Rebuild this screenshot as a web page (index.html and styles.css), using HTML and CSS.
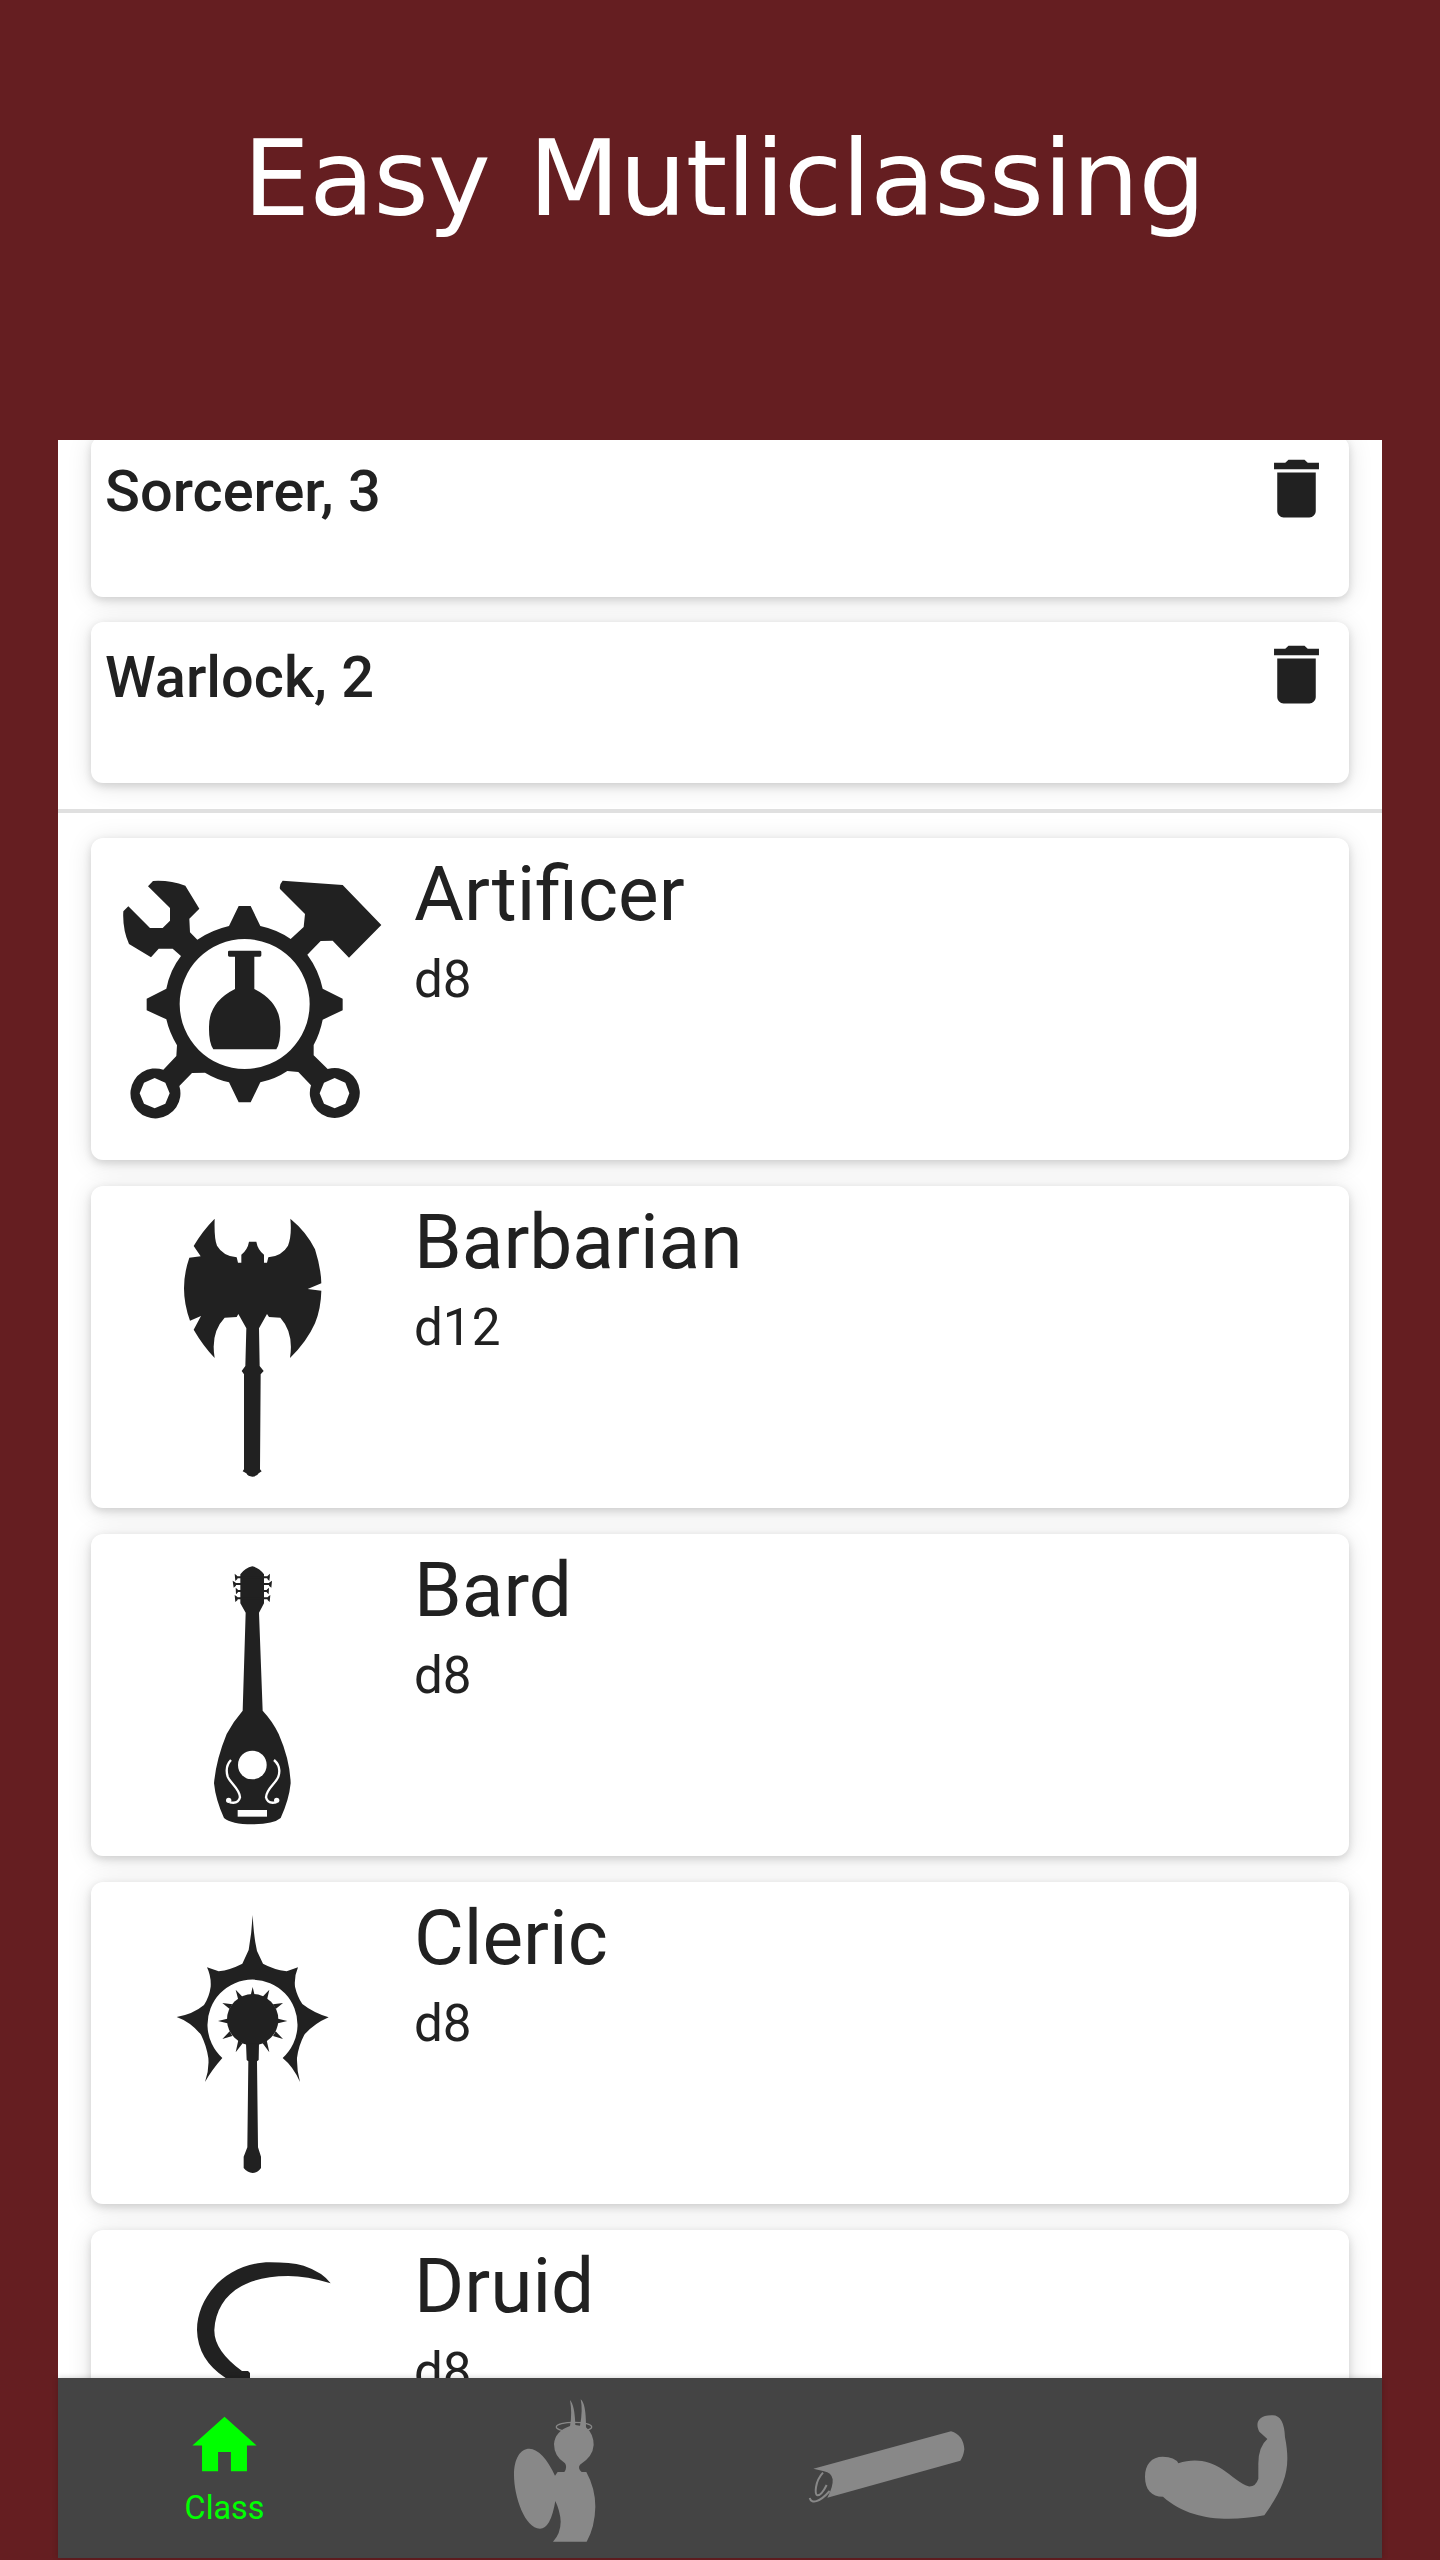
FILE: index.html
```html
<!DOCTYPE html>
<html lang="en">
<head>
<meta charset="utf-8">
<title>Easy Mutliclassing</title>
<link rel="stylesheet" href="styles.css">
</head>
<body>
<main class="promo">
  <h1 class="headline">Easy Mutliclassing</h1>
  <section class="phone">
    <div class="scroll">
      <div class="taken">
        <article class="level-card">
          <h2 class="level-name">Sorcerer, 3</h2>
          <svg class="trash" viewBox="0 0 24 24"><path d="M6 19c0 1.100.9 2 2 2h8c1.100 0 2-.9 2-2V7H6v12zM19 4h-3.500l-1-1h-5l-1 1H5v2h14V4z"/></svg>
        </article>
        <article class="level-card">
          <h2 class="level-name">Warlock, 2</h2>
          <svg class="trash" viewBox="0 0 24 24"><path d="M6 19c0 1.100.9 2 2 2h8c1.100 0 2-.9 2-2V7H6v12zM19 4h-3.500l-1-1h-5l-1 1H5v2h14V4z"/></svg>
        </article>
      </div>
      <div class="classes">
        <article class="class-card">
          <svg class="emblem" viewBox="-27 -36 969 969">
            <path fill-rule="evenodd" d="M387 228L416 168H452L481 228Q532 239 572 267L611 231L615 192L540 117Q537 104 548 92L728 105L844 225L747 323L698 272L662 273L622 314Q656 360 668 416L728 446V481L668 509Q660 550 641 585V616L683 657A75 75 0 1 1 633 706L595 666L562 663Q527 687 481 697L452 757H416L387 697Q348 688 315 668L276 669L238 708A75 75 0 1 1 190 659L229 618L231 586Q208 548 199 508L140 481V446L199 416Q210 360 243 318L218 296H176L153 322L87 282Q67 237 70 184L85 169L150 234H188L210 212V174L144 109L159 93Q210 90 256 107L298 176L268 206L270 247L292 269Q335 240 387 228ZM434 267A195 195 0 1 0 434 657A195 195 0 1 0 434 267ZM164 684L132 698L119 730L132 761L164 775L196 761L209 730L196 698ZM704 684L672 698L659 730L672 761L704 775L736 761L748 730L736 698Z"/>
            <path d="M388 302H480Q484 302 484 306V316Q484 320 480 320H463V417Q541 456 541 530Q542 578 529 598H340Q326 578 327 530Q327 456 405 417V320H388Q384 320 384 316V306Q384 302 388 302Z"/>
          </svg>
          <div class="class-text"><h2 class="class-name">Artificer</h2><p class="hit-die">d8</p></div>
        </article>
        <article class="class-card">
          <svg class="emblem" viewBox="-207 -42 969 969">
            <path d="M164 56Q128 92 101 138L122 169L88 173Q55 268 90 362L123 348L101 389Q129 437 164 474Q151 398 194 353L230 351L235 342L259 385L256 498L245 513L252 523V808L248 814L259 820Q264 830 277 830Q291 830 296 820L305 814L300 808L302 523L311 513L299 498L297 385L321 342L327 351L361 353Q402 398 390 474Q440 426 465 370Q483 325 484 272L443 267L484 250Q483 205 465 148Q440 96 391 56Q396 107 384 137Q366 168 325 172L321 188H312V164Q293 149 289 125H267Q263 149 244 164V188H234L230 172Q189 168 171 137Q162 117 164 56Z"/>
          </svg>
          <div class="class-text"><h2 class="class-name">Barbarian</h2><p class="hit-die">d12</p></div>
        </article>
        <article class="class-card">
          <svg class="emblem" viewBox="-297 -48 969 969">
            <path d="M187 49Q207 53 222 73V160L207 188L218 482Q248 514 266 552Q300 630 302 700Q297 750 272 804Q250 823 187 823Q124 823 102 804Q77 750 72 700Q78 630 110 552Q130 514 158 482L167 188L151 160V73Q166 53 187 49Z"/>
            <path class="line" stroke-width="6" d="M137 82H238M132 102H243M140 123H234M137 145H238"/>
            <path d="M134 71Q152 82 136 93ZM128 92Q149 102 131 113ZM137 113Q153 123 138 133ZM134 135Q153 145 136 156ZM240 71Q223 82 238 93ZM246 92Q226 102 244 113ZM237 113Q221 123 236 133ZM241 135Q223 145 239 156Z"/>
            <circle class="cut" cx="187" cy="645" r="43"/>
            <path class="cut" d="M143 780H231V800H143Z"/>
            <path class="cut-line" d="M123 630Q104 650 113 680C121 700 149 716 150 742Q145 763 119 757M252 630Q275 650 265 680C258 700 229 716 228 742Q233 763 259 757"/>
            <circle class="cut" cx="116" cy="751" r="8"/><circle class="cut" cx="260" cy="751" r="8"/>
          </svg>
          <div class="class-text"><h2 class="class-name">Bard</h2><p class="hit-die">d8</p></div>
        </article>
        <article class="class-card">
          <svg class="emblem" viewBox="-207 -54 969 969">
            <path d="M278 45Q281 110 291 153L309 191Q340 208 380 214L414 202Q402 230 405 260Q412 290 427 312Q460 338 506 352Q462 371 433 404Q415 438 411 474Q410 510 420 546Q400 500 368 474A135 135 0 1 0 187 474Q155 510 135 546Q148 510 145 474Q140 438 123 404Q92 366 50 351Q100 342 132 315Q148 290 152 260Q154 230 141 202L176 214Q210 210 247 191L266 150Q275 100 278 45Z"/>
            <circle cx="278" cy="359" r="77"/>
            <path d="M278 261L285 290H271ZM328 269L321 300L307 291ZM369 309L347 327L339 313ZM382 363L348 371V355ZM369 417L339 408L347 394ZM328 457L308 430L320 421ZM227 457L235 421L248 430ZM187 417L209 394L217 408ZM174 363L208 355V371ZM187 309L217 313L209 327ZM227 269L248 291L235 300Z"/>
            <path d="M258 430H297L296 480L291 484L294 742L303 770V804Q294 818 278 819Q262 818 251 804V770L262 742L265 484L260 480Z"/>
          </svg>
          <div class="class-text"><h2 class="class-name">Cleric</h2><p class="hit-die">d8</p></div>
        </article>
        <article class="class-card">
          <svg class="emblem" viewBox="-207 0 969 969">
            <path d="M512 160Q489 127 431 107Q390 97 330 97C200 97 111 200 111 300Q113 390 197 444L262 500L290 480L270 444V429L264 423H246Q162 362 163 300C168 205 240 138 385 138Q440 138 512 160Z"/>
          </svg>
          <div class="class-text"><h2 class="class-name">Druid</h2><p class="hit-die">d8</p></div>
        </article>
      </div>
    </div>
    <nav class="tabs">
      <a class="tab tab-active">
        <svg class="home" viewBox="0 0 24 24"><path d="M10 20v-6h4v6h5v-8h3L12 3 2 12h3v8z"/></svg>
        <span class="tab-label">Class</span>
      </a>
      <a class="tab"><svg class="tab-art" viewBox="-273 24 993 540">
        <ellipse class="halo" cx="282" cy="171" rx="53" ry="14"/>
        <path d="M270 90Q284 105 286 165L300 167Q309 120 302 88Q318 99 318 172Q341 192 341 225Q339 260 300 284Q292 294 305 306H319Q346 355 346 410Q345 470 320 515H219Q242 490 242 455Q241 425 226 393Q212 476 180 476C135 476 102 380 102 315C102 265 121 236 148 236Q188 238 225 317L233 306H253Q263 292 255 280Q222 259 222 222Q225 184 270 168Q277 130 270 90Z"/>
      </svg></a>
      <a class="tab"><svg class="tab-art" viewBox="-180 -66 993 540">
        <path d="M100 206L513 94Q550 105 553 148Q550 170 541 182L142 293Q160 260 158 238Q154 217 132 214Z"/>
        <path class="curl" d="M129 218C104 245 104 283 112 286C122 287 132 271 140 255M89 294C94 312 118 308 149 273"/>
      </svg></a>
      <a class="tab"><svg class="tab-art" viewBox="-177 -6 993 540">
        <path d="M159 350C124 350 105 328 105 290C105 253 125 230 158 230Q195 230 205 250C250 235 297 240 337 268C365 287 394 314 415 319Q437 321 445 296V255Q444 201 472 177L448 155C436 134 441 106 484 106Q522 102 525 172C544 265 525 318 463 406C350 426 238 421 159 350Z"/>
      </svg></a>
    </nav>
  </section>
</main>
</body>
</html>
```
FILE: styles.css
```css
* { box-sizing: border-box; }

body {
  margin: 0;
  background: #651e21;
  font-family: Roboto, sans-serif;
  color: #212121;
}

h1, h2, p { margin: 0; font-weight: 400; }
svg { display: block; fill: currentColor; }

.promo {
  height: 2560px;
  padding: 0 58px 2px;
  display: flex;
  flex-direction: column;
  overflow: hidden;
}

.headline {
  height: 440px;
  padding: 117px 0 0 8px;
  font: 400 106px/123px "DejaVu Sans", sans-serif;
  letter-spacing: -.75px;
  word-spacing: 5.800px;
  color: #fff;
  text-align: center;
  white-space: nowrap;
}

.phone {
  height: 2118px;
  display: flex;
  flex-direction: column;
  background: #fff;
}

.scroll { flex: 1; min-height: 0; overflow: hidden; }

.taken {
  display: flex;
  flex-direction: column;
  gap: 25.500px;
  margin-top: -4px;
  padding: 0 33px 26px;
  border-bottom: 4px solid #e0e0e0;
}

.level-card, .class-card {
  display: flex;
  background: #fff;
  border-radius: 12px;
  box-shadow: 0 3px 8px rgba(0, 0, 0, .14), 0 3px 26px rgba(0, 0, 0, .11);
}

.level-card {
  height: 160.700px;
  padding: 14px 14px 0;
  justify-content: space-between;
}

.level-name { font-size: 57.700px; line-height: 83px; font-weight: 500; }
.trash { width: 77px; height: 77px; }

.classes {
  display: flex;
  flex-direction: column;
  gap: 25.500px;
  padding: 25.100px 33px 0;
}

.class-card { height: 322.500px; flex: none; }
.emblem { width: 323px; height: 323px; flex: none; }
.line { fill: none; stroke: currentColor; }
.cut { fill: #fff; }
.cut-line { fill: none; stroke: #fff; stroke-width: 7; }

.class-text { padding-top: 11px; }
.class-name { font-size: 76.600px; line-height: 90px; }
.hit-die { font-size: 51.200px; line-height: 60px; margin-top: 11px; }

.tabs {
  height: 180px;
  display: grid;
  grid-template-columns: repeat(4, 1fr);
  background: #444;
  color: #888;
  position: relative;
  box-shadow: 0 0 6px rgba(0, 0, 0, .2);
}

.tab-active {
  display: flex;
  flex-direction: column;
  align-items: center;
  padding: 29px 0 0 2px;
  color: #0f0;
}

.home { width: 77px; height: 77px; }
.tab-label { font-size: 32.300px; line-height: 38px; margin-top: 5px; }
.tab-art { width: 331px; height: 180px; }
.halo { fill: none; stroke: currentColor; stroke-width: 4; }
.curl { fill: none; stroke: currentColor; stroke-width: 6; }
```
